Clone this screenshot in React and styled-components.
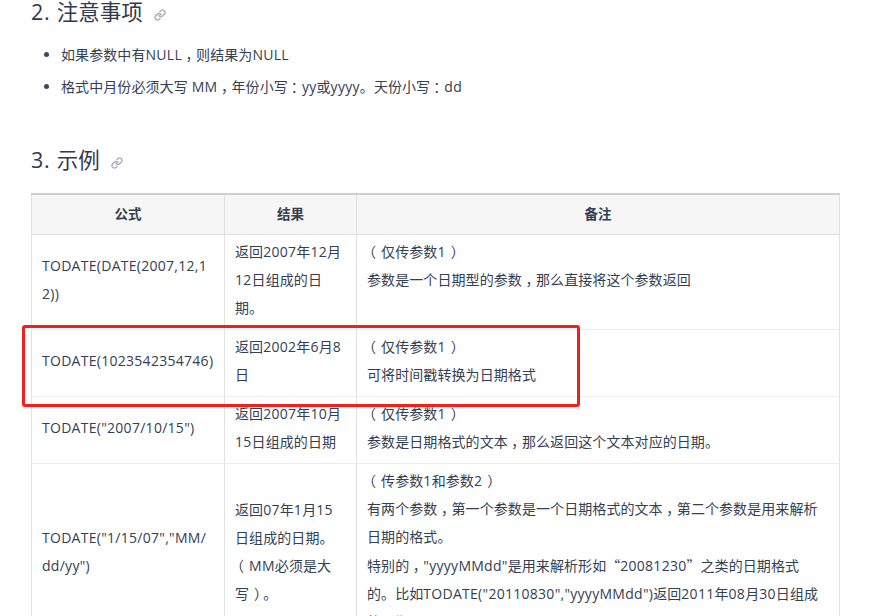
import React from 'react';
import styled, { createGlobalStyle } from 'styled-components';

const GlobalStyle = createGlobalStyle`
    html, body {
        margin: 0;
        height: 100%;
        overflow: hidden;
        background: #fff;
    }
    body {
        font-family: "Open Sans", "Noto Sans CJK SC", sans-serif;
        font-size: 14px;
        letter-spacing: 0.08px;
        color: #34404f;
    }
`;

const rows = [
    {
        height: 95,
        formula: ['TODATE(DATE(2007,12,1', '2))'],
        result: ['返回2007年12月', '12日组成的日', '期。'],
        note: ['（仅传参数1）', '参数是一个日期型的参数，那么直接将这个参数返回'],
    },
    {
        height: 67,
        formula: ['TODATE(1023542354746)'],
        result: ['返回2002年6月8', '日'],
        note: ['（仅传参数1）', '可将时间戳转换为日期格式'],
    },
    {
        height: 67,
        formula: ['TODATE("2007/10/15")'],
        result: ['返回2007年10月', '15日组成的日期'],
        note: ['（仅传参数1）', '参数是日期格式的文本，那么返回这个文本对应的日期。'],
    },
    {
        height: 179,
        formula: ['TODATE("1/15/07","MM/', 'dd/yy")'],
        result: ['返回07年1月15', '日组成的日期。', '（MM必须是大', '写）。'],
        note: [
            '（传参数1和参数2）',
            '有两个参数，第一个参数是一个日期格式的文本，第二个参数是用来解析',
            '日期的格式。',
            '特别的，"yyyyMMdd"是用来解析形如“20081230”之类的日期格式',
            '的。比如TODATE("20110830","yyyyMMdd")返回2011年08月30日组成',
            '的日期。',
        ],
    },
];

// fullwidth punctuation sits differently in the original font
const punctShift = { '，': 3.5, '：': 3, '（': -5, '）': 5 };

function Mixed({ text }) {
    const parts = text.split(/([\x20-\x7e]+|[，：（）]|[“”])/).filter(Boolean);
    return parts.map((part, index) => {
        if (punctShift[part]) return <Punct key={index} $shift={punctShift[part]}>{part}</Punct>;
        if (part === '“' || part === '”') return <Quote key={index} $open={part === '“'}>{part}</Quote>;
        if (/^[\x20-\x7e]+$/.test(part)) return <Latin key={index}>{part}</Latin>;
        return part;
    });
}

function LinkIcon() {
    return (
        <AnchorIcon viewBox="0 0 24 24" fill="none" stroke="currentColor" strokeWidth="2.6" strokeLinecap="round" strokeLinejoin="round">
            <path d="M10 13a5 5 0 0 0 7.54.54l3-3a5 5 0 0 0-7.07-7.07l-1.72 1.71" />
            <path d="M14 11a5 5 0 0 0-7.54-.54l-3 3a5 5 0 0 0 7.07 7.07l1.71-1.71" />
        </AnchorIcon>
    );
}

function Lines({ lines }) {
    return lines.map((line, index) => <CellLine key={index}><Mixed text={line} /></CellLine>);
}

export default function App() {
    return (
        <Page>
            <GlobalStyle />
            <Heading><HeadingNumber>2. </HeadingNumber>注意事项<LinkIcon /></Heading>
            <Notes>
                <li><Mixed text="如果参数中有NULL，则结果为NULL" /></li>
                <li><Mixed text="格式中月份必须大写 MM，年份小写：yy或yyyy。天份小写：dd" /></li>
            </Notes>
            <SecondHeading><HeadingNumber>3. </HeadingNumber>示例<LinkIcon /></SecondHeading>
            <TableWrap>
                <Table>
                    <colgroup>
                        <col style={{ width: 193 }} />
                        <col style={{ width: 132 }} />
                        <col />
                    </colgroup>
                    <thead>
                        <tr>
                            <HeadCell>公式</HeadCell>
                            <HeadCell>结果</HeadCell>
                            <HeadCell>备注</HeadCell>
                        </tr>
                    </thead>
                    <tbody>
                        {rows.map((row, index) => (
                            <Row key={index} $height={row.height}>
                                <Cell><Lines lines={row.formula} /></Cell>
                                <Cell><Lines lines={row.result} /></Cell>
                                <Cell $top><Lines lines={row.note} /></Cell>
                            </Row>
                        ))}
                    </tbody>
                </Table>
                <Highlight />
            </TableWrap>
        </Page>
    );
}

const Page = styled.div`
    padding: 0 44px 0 31px;
`;

const Heading = styled.h2`
    display: flex;
    align-items: center;
    margin: 0;
    height: 24px;
    font-size: 21.5px;
    font-weight: 400;
    letter-spacing: 0;
    line-height: 24px;
    color: #2f3b4a;
`;

const SecondHeading = styled(Heading)`
    margin-top: 47px;
`;

const HeadingNumber = styled.span`
    letter-spacing: 0.7px;
    white-space: pre;
`;

const AnchorIcon = styled.svg`
    width: 12px;
    height: 12px;
    margin-left: 11px;
    margin-top: 5px;
    color: #a3adba;
`;

const Latin = styled.span`
    letter-spacing: 0.28px;
`;

const Punct = styled.span`
    display: inline-block;
    transform: translateX(${(props) => props.$shift}px);
`;

const Quote = styled.span`
    display: inline-block;
    width: 14px;
    font-family: "Noto Sans CJK SC", sans-serif;
    text-align: ${(props) => (props.$open ? 'right' : 'left')};
`;

const Notes = styled.ul`
    margin: 17px 0 0;
    padding: 0 0 0 30px;
    li {
        line-height: 28px;
        margin-bottom: 4px;
    }
    li::marker {
        color: #3c4856;
    }
`;

const TableWrap = styled.div`
    position: relative;
    margin-top: 21px;
`;

const Table = styled.table`
    width: 809px;
    table-layout: fixed;
    border-collapse: collapse;
    border-top: 2px solid #cfcfcf;
`;

const HeadCell = styled.th`
    height: 36px;
    padding: 0 10px 3px;
    background: #f6f6f6;
    border: 1px solid #dfdfdf;
    border-top: 0;
    font-weight: 700;
    font-size: 13.5px;
    text-align: center;
`;

const Row = styled.tr`
    height: ${(props) => props.$height}px;
`;

const Cell = styled.td`
    padding: 3px 10px 7px;
    border: 1px solid #e2e2e2;
    border-bottom: 1px solid #ececec;
    vertical-align: ${(props) => (props.$top ? 'top' : 'middle')};
    white-space: nowrap;
    overflow: hidden;
`;

const CellLine = styled.div`
    line-height: 28px;
`;

const Highlight = styled.div`
    position: absolute;
    left: -9px;
    top: 132px;
    width: 552px;
    height: 76px;
    border: 3px solid #f0201c;
    border-radius: 3px;
    pointer-events: none;
`;
